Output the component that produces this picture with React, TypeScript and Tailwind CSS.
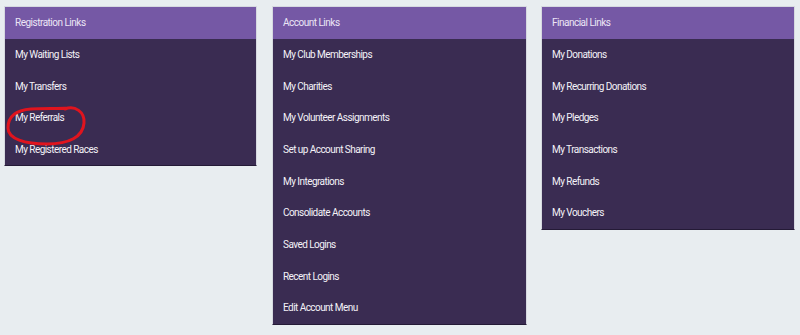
import React from "react";

interface LinkPanelProps {
  title: string;
  links: string[];
  className?: string;
  children?: React.ReactNode;
}

const registrationLinks = ["My Waiting Lists", "My Transfers", "My Referrals", "My Registered Races"];

const accountLinks = [
  "My Club Memberships",
  "My Charities",
  "My Volunteer Assignments",
  "Set up Account Sharing",
  "My Integrations",
  "Consolidate Accounts",
  "Saved Logins",
  "Recent Logins",
  "Edit Account Menu",
];

const financialLinks = [
  "My Donations",
  "My Recurring Donations",
  "My Pledges",
  "My Transactions",
  "My Refunds",
  "My Vouchers",
];

const LinkPanel: React.FC<LinkPanelProps> = ({ title, links, className = "", children }) => (
  <div className={`relative border border-[#d6d9e0] border-b-[#241a36] ${className}`}>
    <div className="h-[31.67px] bg-[#7558a5] px-[10px] flex items-center text-[10px] tracking-[-0.5px] text-[#ece6f6]">
      {title}
    </div>
    <ul className="bg-[#3a2c52]">
      {links.map((link) => (
        <li
          key={link}
          className="h-[31.67px] px-[10px] flex items-center text-[10px] tracking-[-0.55px] text-[#f4f2f8]"
        >
          <a href="#">{link}</a>
        </li>
      ))}
    </ul>
    {children}
  </div>
);

// hand-drawn red circle around "My Referrals"
const RedCircle = () => (
  <svg className="absolute left-0 top-[94px] pointer-events-none" width="86" height="48" viewBox="0 0 86 48">
    <path
      d="M60 8 C 70 4, 80 11, 79 22 C 78 36, 64 43, 42 43 C 20 43, 3 38, 3 27 C 3 15, 12 9, 26 8 C 40 7, 52 8, 63 7"
      fill="none"
      stroke="#e0141e"
      strokeWidth="3"
      strokeLinecap="round"
    />
  </svg>
);

export default function App() {
  return (
    <div
      className="min-h-[335px] w-[800px] bg-[#e8edf0] pt-[6px] pl-[4px]"
      style={{ fontFamily: "Roboto, 'Noto Sans', sans-serif" }}
    >
      <div className="flex items-start">
        <LinkPanel title="Registration Links" links={registrationLinks} className="w-[253px]">
          <RedCircle />
        </LinkPanel>
        <LinkPanel title="Account Links" links={accountLinks} className="w-[255px] ml-[15px]" />
        <LinkPanel title="Financial Links" links={financialLinks} className="w-[254px] ml-[14px]" />
      </div>
    </div>
  );
}
